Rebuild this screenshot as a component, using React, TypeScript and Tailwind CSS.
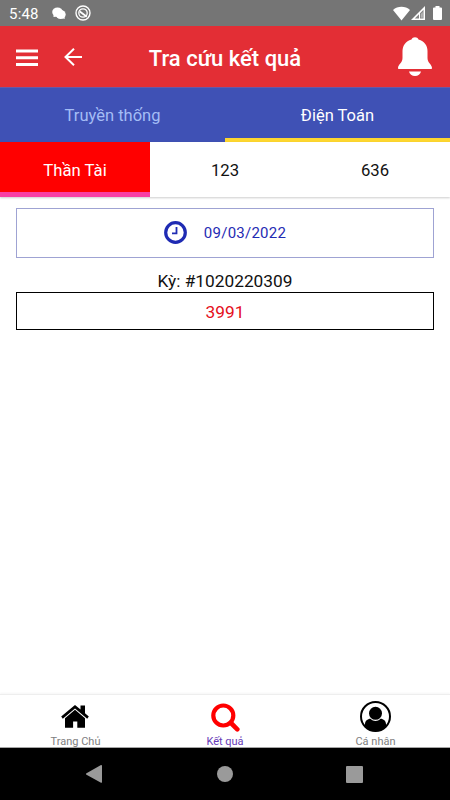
import { useState } from "react";

const mainTabs = ["Truyền thống", "Điện Toán"];
const gameTabs = ["Thần Tài", "123", "636"];

function StatusBar() {
  return (
    <div className="h-[26px] shrink-0 bg-[#757575] flex items-center pl-[9px] pr-2 text-white">
      <span className="w-[43px] text-[15px] leading-[26px] tracking-[0.2px] pt-px">5:48</span>
      <svg className="w-[14px] h-[13px]" viewBox="0 0 14 13" fill="currentColor">
        <ellipse cx="5.500" cy="5" rx="5.300" ry="4.500" />
        <ellipse cx="8.700" cy="7.500" rx="5" ry="4.500" />
        <path d="M1.500 7v3l4-.5zM10 11l2.800 1-.6-3z" />
      </svg>
      <svg className="ml-[9px] w-4 h-4" viewBox="0 0 16 16" fill="none" stroke="currentColor">
        <circle cx="8" cy="8" r="7" strokeWidth="1.400" />
        <circle cx="8" cy="8" r="4.200" strokeWidth="1.300" />
        <path d="M4.800 6.500l7 5.200" strokeWidth="1.700" />
      </svg>
      <div className="flex-1" />
      <svg className="w-[17px] h-[15px]" viewBox="0 0 17 15" fill="currentColor">
        <path d="M8.500 14.500L0 4C4.500-.2 12.500-.2 17 4z" />
      </svg>
      <svg className="ml-px w-[14px] h-[14px]" viewBox="0 0 14 14">
        <path d="M0 14L14 0v14z" fill="currentColor" />
        <path d="M3.800 12.500L8 8.300v4.200zM9 12.500V7.200l3.500-3.500v8.800z" fill="#858585" />
        <path d="M9.800 11.700V8l2-2v5.700z" fill="#b5b5b5" />
      </svg>
      <svg className="ml-[8px] w-[9px] h-[14px]" viewBox="0 0 9 14" fill="currentColor">
        <path d="M2.500 0h4v1.500H8a1 1 0 0 1 1 1V13a1 1 0 0 1-1 1H1a1 1 0 0 1-1-1V2.500a1 1 0 0 1 1-1h1.500z" />
      </svg>
    </div>
  );
}

function Header() {
  return (
    <header className="h-[61px] shrink-0 bg-[#e32e35] grid grid-cols-[1fr_auto_1fr] items-center px-[17px] text-white">
      <div className="flex items-center">
        <button aria-label="Menu" className="-ml-px">
          <svg className="block w-[22px] h-[18px] mt-[2px]" viewBox="0 0 22 18" fill="currentColor">
            <path d="M0 .5h22v3H0zM0 7.300h22v3H0zM0 14h22v3H0z" />
          </svg>
        </button>
        <button aria-label="Back" className="ml-[26px]">
          <svg className="block w-[18px] h-[18px] mt-px" viewBox="0 0 18 18" fill="none" stroke="currentColor" strokeWidth="2">
            <path d="M18 9H1.500M10 .8L1.500 9l8.500 8.200" />
          </svg>
        </button>
      </div>
      <h1 className="text-[22px] font-medium leading-none pt-[4px]">Tra cứu kết quả</h1>
      <button aria-label="Notifications" className="justify-self-end mr-px">
        <svg className="block w-[34px] h-[39px]" viewBox="0 0 34 39" fill="currentColor">
          <path d="M13.500 2.500C14.500-.5 19.500-.5 20.500 2.500 26.500 4 29.500 9 29.500 14v7c0 5 4.500 6.500 4.500 10 0 .7-.4 1-1 1H1c-.6 0-1-.3-1-1 0-3.500 4.500-5 4.500-10v-7c0-5 3-10 9-11.500z" />
          <path d="M11 34.500h12c-.5 2.500-3 4.500-6 4.500s-5.500-2-6-4.500z" />
        </svg>
      </button>
    </header>
  );
}

function BottomNav() {
  return (
    <nav className="h-[54px] shrink-0 grid grid-cols-3 border-t border-[#eeeeee] border-b border-b-[#a5a5a5] bg-white shadow-[0_-1px_2px_rgba(0,0,0,0.04)] text-[11px] text-[#808080]">
      <div className="flex flex-col items-center">
        <svg className="w-[28px] h-[23px] mt-[10px] text-black" viewBox="0 0 28 23" fill="currentColor">
          <path d="M14 0l5.500 4.600V.5h4.500v7.800l3.800 3.300-1.600 2.100L14 3.400 1.800 13.700.2 11.600z" />
          <path d="M14 4.800l10 8.400V22.700h-7.700v-6.300h-4.200v6.300H4v-9.500z" />
        </svg>
        <span className="mt-[7px] leading-[13px] pl-[1px]">Trang Chủ</span>
      </div>
      <div className="flex flex-col items-center">
        <svg className="w-[29px] h-[29px] mt-[8px] text-[#ff0000]" viewBox="0 0 29 29" fill="none" stroke="currentColor">
          <circle cx="12.300" cy="12.500" r="10" strokeWidth="4.200" />
          <path d="M20 20l6.300 6.300" strokeWidth="4.600" strokeLinecap="round" />
        </svg>
        <span className="mt-[3px] leading-[13px] text-[#673ab7]">Kết quả</span>
      </div>
      <div className="flex flex-col items-center">
        <svg className="w-[31px] h-[31px] mt-[6px] text-black" viewBox="0 0 31 31" fill="currentColor">
          <circle cx="15.500" cy="15.500" r="14.500" fill="none" stroke="currentColor" strokeWidth="2" />
          <circle cx="15.500" cy="12.300" r="6.500" />
          <path d="M5 25v-2c0-3 2.500-5.300 5.500-5.300 3 3 7 3 10 0 3 0 5.500 2.300 5.500 5.300v2c-5 7-16 7-21 0z" />
        </svg>
        <span className="mt-[3px] leading-[13px] pl-[1px]">Cá nhân</span>
      </div>
    </nav>
  );
}

export default function App() {
  const [mainTab, setMainTab] = useState(1);
  const [game, setGame] = useState(0);

  return (
    <div className="w-[450px] h-[800px] flex flex-col overflow-hidden bg-white font-['Roboto',sans-serif]">
      <StatusBar />
      <Header />

      {/* Lottery kind */}
      <div className="h-[55px] shrink-0 grid grid-cols-2 bg-[#3f51b5] border-t border-[#6a58a5]">
        {mainTabs.map((label, i) => (
          <button
            key={label}
            onClick={() => setMainTab(i)}
            className={`text-[16.500px] pt-[6px] border-b-4 ${i === mainTab ? "text-white border-[#fdd62f]" : "text-[#a5bdf5] border-[#3f51b5]"}`}
          >
            {label}
          </button>
        ))}
      </div>

      {/* Games */}
      <div className="h-[55px] shrink-0 grid grid-cols-3 shadow-[0_1px_2px_rgba(0,0,0,0.2)]">
        {gameTabs.map((label, i) => (
          <button
            key={label}
            onClick={() => setGame(i)}
            className={`text-[16.700px] pt-[8px] border-b-[5px] ${i === game ? "bg-[#ff0000] text-white border-[#f83ea4]" : "text-[#111111] border-white"}`}
          >
            {label}
          </button>
        ))}
      </div>

      <main className="flex-1 px-4 pt-[11px]">
        <button className="w-full h-[50px] border border-[#9fa3d3] flex items-center justify-center text-[#1f2bb3] text-[15px] tracking-[0.25px]">
          <svg className="w-[23px] h-[23px] mr-[17px] -mt-px" viewBox="0 0 23 23" fill="none" stroke="currentColor">
            <circle cx="11.500" cy="11.500" r="9.800" strokeWidth="3.200" />
            <path d="M12.500 6v6.300H8" strokeWidth="1.800" />
          </svg>
          09/03/2022
        </button>
        <div className="mt-[13px] h-[21px] text-center text-[17.300px] leading-[21px] text-[#111111]">Kỳ: #1020220309</div>
        <div className="h-[38px] border border-black text-center text-[17.300px] leading-[38px] text-[#e5101c]">3991</div>
      </main>

      <BottomNav />

      {/* System navigation */}
      <div className="h-[52px] shrink-0 bg-black flex items-center text-[#9a9a9a]">
        <svg className="w-4 h-[18px] ml-[86px]" viewBox="0 0 16 18" fill="currentColor">
          <path d="M15 0c.6 0 1 .4 1 1v16c0 .6-.5 1.100-1 .8L.5 9.700C-.2 9.300-.2 8.700.5 8.300z" />
        </svg>
        <div className="size-4 ml-[115px] rounded-full bg-[#9a9a9a]" />
        <div className="size-[17px] ml-[113px] rounded-[1px] bg-[#9a9a9a]" />
      </div>
    </div>
  );
}
